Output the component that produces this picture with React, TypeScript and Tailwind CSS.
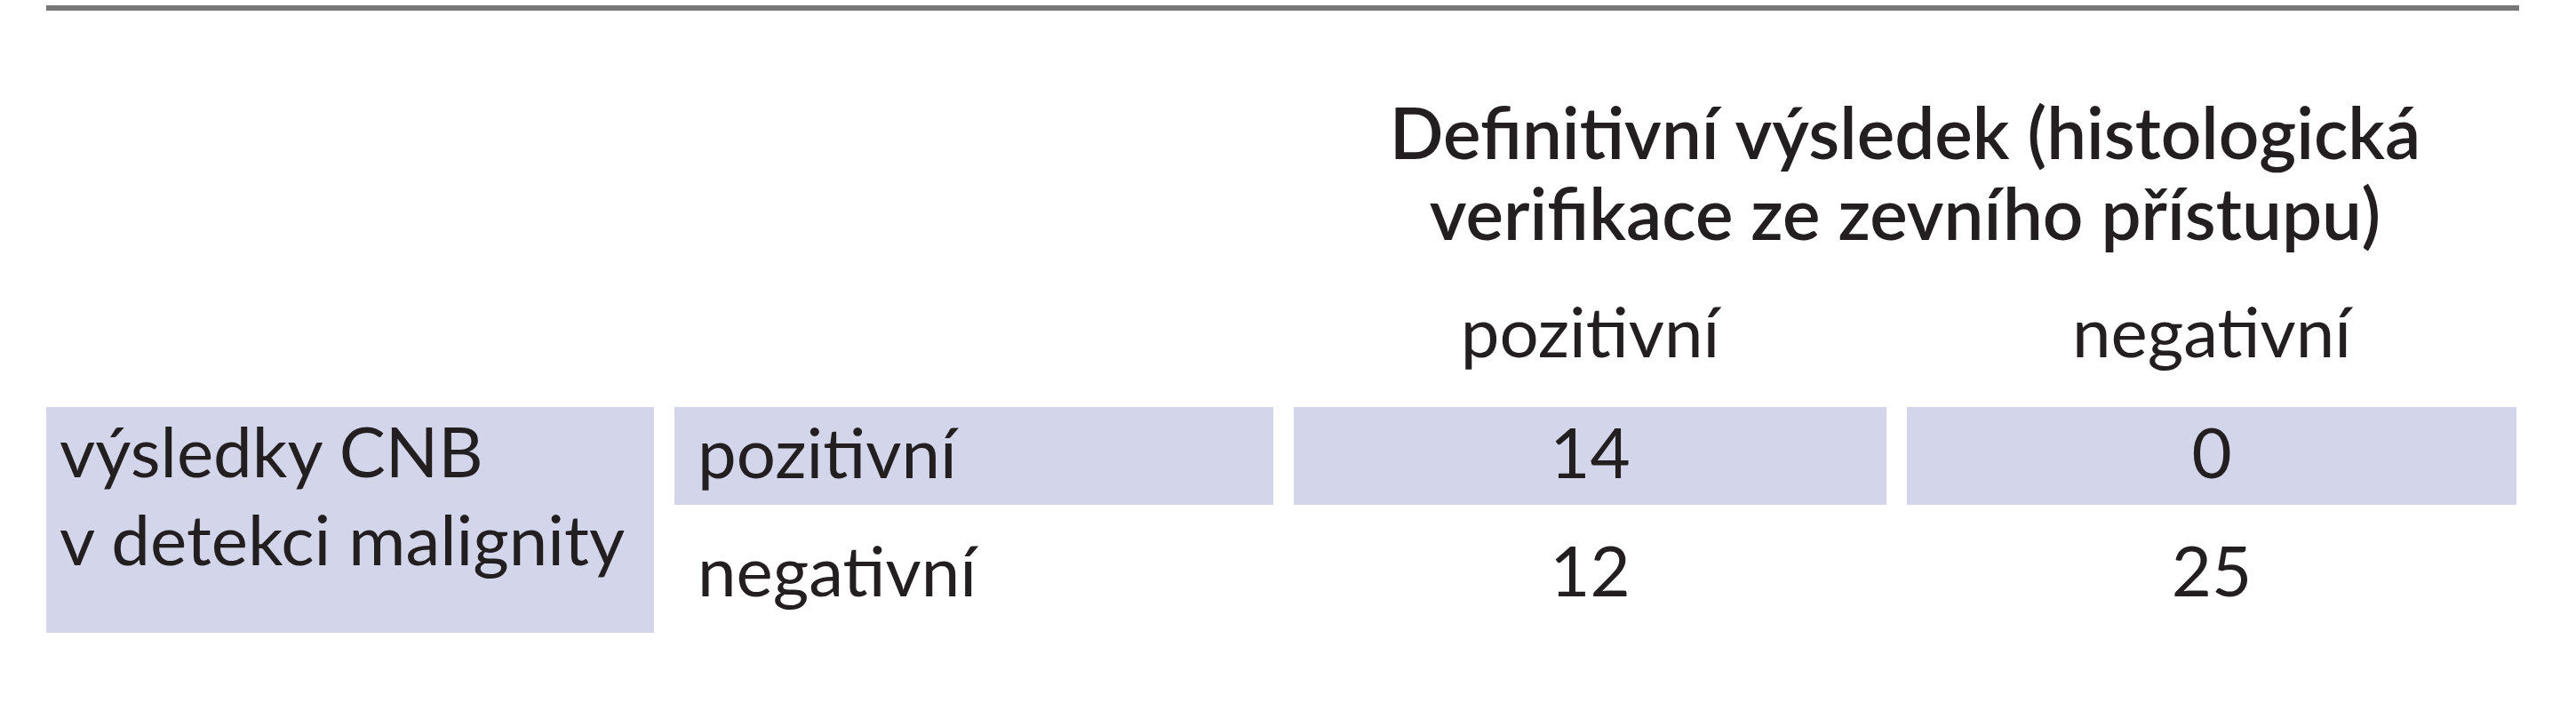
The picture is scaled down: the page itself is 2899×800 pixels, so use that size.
const cell = 'bg-[#d3d6ea]'

export default function App() {
  return (
    <div className="h-[800px] w-[2899px] bg-white pl-[52px] pt-[6px] font-['Lato',sans-serif] text-[#231f20]">
      <div className="h-[6px] w-[2783px] bg-[#777777]" />

      {/* header */}
      <div className="grid grid-cols-[684px_674px_667px_686px] gap-x-[23px]">
        <div className="col-span-2 col-start-3 mt-[91px] text-center text-[80px] font-semibold leading-[91px]">
          Definitivní výsledek (histologická
          <br />
          verifikace ze zevního přístupu)
        </div>
        <div className="col-start-3 mt-[38px] text-center text-[78px] leading-[99px]">pozitivní</div>
        <div className="col-start-4 mt-[38px] text-center text-[78px] leading-[99px]">negativní</div>
      </div>

      {/* body */}
      <div className="mt-[36px] grid grid-cols-[684px_674px_667px_686px] grid-rows-[110px_122px] gap-x-[23px] gap-y-[22px] text-[78px] leading-[99px]">
        <div className={`row-span-2 px-[15px] ${cell}`}>
          výsledky CNB
          <br />
          v detekci malignity
        </div>
        <div className={`pl-[26px] pt-[1px] ${cell}`}>pozitivní</div>
        <div className={`pt-[1px] text-center ${cell}`}>14</div>
        <div className={`pt-[1px] text-center ${cell}`}>0</div>
        <div className="pl-[26px] pt-[2px]">negativní</div>
        <div className="pt-[2px] text-center">12</div>
        <div className="pt-[2px] text-center">25</div>
      </div>
    </div>
  )
}
